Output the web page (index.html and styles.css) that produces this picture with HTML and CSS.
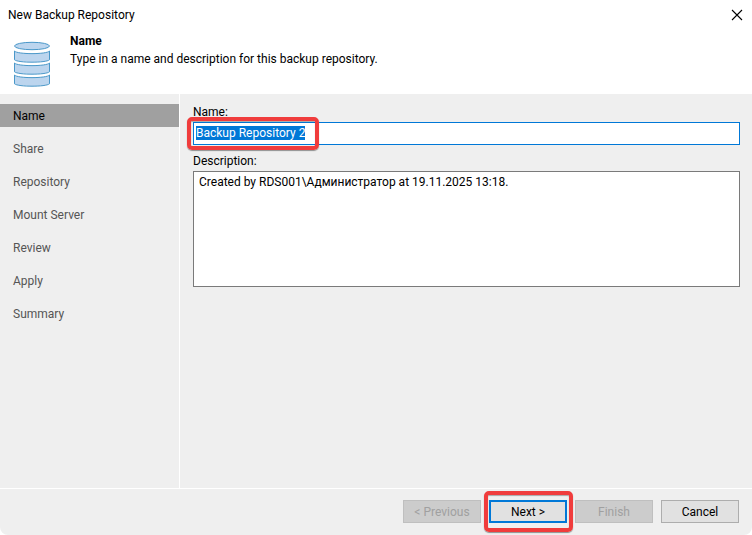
FILE: index.html
```html
<!DOCTYPE html>
<html lang="en">
<head>
  <meta charset="UTF-8" />
  <meta name="viewport" content="width=device-width, initial-scale=1" />
  <title>New Backup Repository</title>
  <link rel="stylesheet" href="styles.css">
</head>
<body>
  <div class="window">
    <div class="titlebar">
      <span>New Backup Repository</span>
      <button type="button" class="close-btn" aria-label="Close">
        <svg width="12" height="12" viewBox="0 0 12 12" aria-hidden="true">
          <path d="M1 1l10 10M11 1L1 11" stroke="#000" stroke-width="1.1" fill="none"/>
        </svg>
      </button>
    </div>

    <header class="header">
      <svg class="header-icon" width="38" height="47" viewBox="0 0 38 47" aria-hidden="true">
        <g fill="#bcd5ee" stroke="#4a98c9" stroke-width="1">
          <ellipse cx="19" cy="5" rx="17.500" ry="3.700"/>
          <path d="M1.500 10C4 13.500 34 13.500 36.500 10V18.800C33 22 5 22 1.500 18.800z"/>
          <path d="M1.500 22C4 25.500 34 25.500 36.500 22V30.800C33 34 5 34 1.500 30.800z"/>
          <path d="M1.500 34C4 37.500 34 37.500 36.500 34V42.800C33 46 5 46 1.500 42.800z"/>
        </g>
      </svg>
      <div>
        <h1>Name</h1>
        <p>Type in a name and description for this backup repository.</p>
      </div>
    </header>

    <div class="main">
      <nav class="steps">
        <a href="#name" class="active">Name</a>
        <a href="#share">Share</a>
        <a href="#repository">Repository</a>
        <a href="#mount">Mount Server</a>
        <a href="#review">Review</a>
        <a href="#apply">Apply</a>
        <a href="#summary">Summary</a>
      </nav>

      <form class="content" id="repoForm">
        <label for="repoName">Name:</label>
        <div class="field">
          <input type="text" id="repoName" value="Backup Repository 2" autocomplete="off" />
          <span class="mark mark-field"></span>
        </div>

        <label for="description">Description:</label>
        <textarea id="description" spellcheck="false">Created by RDS001\Администратор at 19.11.2025 13:18.</textarea>
      </form>
    </div>

    <footer class="footer">
      <button type="button" class="btn" disabled>&lt; Previous</button>
      <div class="field">
        <button type="submit" form="repoForm" class="btn btn-default">Next &gt;</button>
        <span class="mark mark-btn"></span>
      </div>
      <button type="button" class="btn" disabled>Finish</button>
      <button type="button" class="btn">Cancel</button>
    </footer>
  </div>

  <script>
    const repoName = document.getElementById("repoName");
    repoName.focus();
    repoName.select();
  </script>
</body>
</html>
```

FILE: styles.css
```css
* {
  box-sizing: border-box;
}
body {
  margin: 0;
  background: #fff;
  font-family: Roboto, "Noto Sans", sans-serif;
  font-size: 12px;
  line-height: 18px;
  color: #000;
}
.window {
  display: flex;
  flex-direction: column;
  min-height: 100vh;
  background: #efefef;
  border-radius: 0 0 8px 8px;
  overflow: hidden;
}
.titlebar {
  display: flex;
  justify-content: space-between;
  align-items: center;
  height: 30px;
  padding: 0 9px 0 8px;
  background: #fff;
}
.close-btn {
  display: flex;
  padding: 0;
  border: none;
  background: none;
}
.header {
  display: flex;
  gap: 19px;
  height: 64px;
  padding: 2px 13px 0;
  background: #fff;
}
.header-icon {
  margin-top: 9px;
}
.header h1,
.header p {
  margin: 0;
  font-size: 12px;
}
.main {
  display: flex;
  flex: 1;
}
.steps {
  display: flex;
  flex-direction: column;
  gap: 10px;
  width: 180px;
  padding-top: 10px;
  border-right: 1px solid #fff;
}
.steps a {
  height: 23px;
  padding-left: 13px;
  line-height: 24px;
  color: #555;
  text-decoration: none;
}
.steps a.active {
  background: #a0a0a0;
  color: #000;
}
.content {
  flex: 1;
  padding: 9px 12px 0 13px;
}
.content label {
  display: block;
  height: 19px;
}
.field {
  position: relative;
}
input[type="text"],
textarea {
  display: block;
  width: 100%;
  border: 1px solid #7a7a7a;
  border-radius: 0;
  outline: none;
  background: #fff;
  color: #000;
  font: inherit;
}
input[type="text"] {
  height: 23px;
  margin-bottom: 7px;
  padding: 0 2px 1px;
  border-color: #0078d7;
}
input[type="text"]::selection {
  background: #0078d7;
  color: #fff;
}
textarea {
  height: 116px;
  padding: 1px 5px;
  resize: none;
}
.footer {
  display: flex;
  justify-content: flex-end;
  align-items: flex-start;
  gap: 8px;
  height: 47px;
  padding: 11px 13px 0;
  border-top: 1px solid #fff;
}
.btn {
  display: block;
  width: 78px;
  height: 23px;
  padding: 0;
  border: 1px solid #adadad;
  background: #e1e1e1;
  color: #000;
  font: inherit;
}
.btn:disabled {
  border-color: #bfbfbf;
  background: #ccc;
  color: #a0a0a0;
}
.btn-default {
  border: 2px solid #0078d7;
}
/* red callout frames */
.mark {
  position: absolute;
  border: 4px solid #f03c3c;
  border-radius: 5px;
  box-shadow: 0 1px 1px rgba(0, 0, 0, 0.4), inset 0 1px 1px rgba(0, 0, 0, 0.3);
  pointer-events: none;
}
.mark-field {
  top: -5px;
  left: -6px;
  width: 132px;
  height: 33px;
}
.mark-btn {
  inset: -9px -6px -9px -5px;
}
```
